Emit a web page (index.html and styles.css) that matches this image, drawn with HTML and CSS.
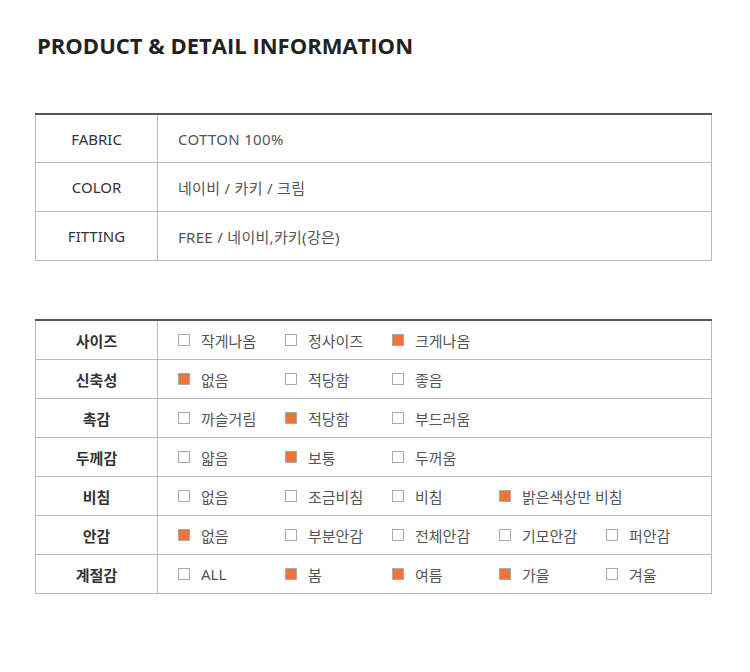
FILE: index.html
```html
<!DOCTYPE html>
<html lang="ko">
<head>
<meta charset="utf-8">
<link rel="stylesheet" href="styles.css">
</head>
<body>
<div class="page">
  <h1 class="title">PRODUCT &amp; DETAIL INFORMATION</h1>

  <table class="info">
    <tr><th>FABRIC</th><td>COTTON 100%</td></tr>
    <tr><th>COLOR</th><td>네이비 / 카키 / 크림</td></tr>
    <tr><th>FITTING</th><td>FREE / 네이비,카키(강은)</td></tr>
  </table>

  <table class="detail">
    <tr><th>사이즈</th><td><div class="opts">
      <span class="opt"><i class="box"></i>작게나옴</span>
      <span class="opt"><i class="box"></i>정사이즈</span>
      <span class="opt"><i class="box on"></i>크게나옴</span>
    </div></td></tr>
    <tr><th>신축성</th><td><div class="opts">
      <span class="opt"><i class="box on"></i>없음</span>
      <span class="opt"><i class="box"></i>적당함</span>
      <span class="opt"><i class="box"></i>좋음</span>
    </div></td></tr>
    <tr><th>촉감</th><td><div class="opts">
      <span class="opt"><i class="box"></i>까슬거림</span>
      <span class="opt"><i class="box on"></i>적당함</span>
      <span class="opt"><i class="box"></i>부드러움</span>
    </div></td></tr>
    <tr><th>두께감</th><td><div class="opts">
      <span class="opt"><i class="box"></i>얇음</span>
      <span class="opt"><i class="box on"></i>보통</span>
      <span class="opt"><i class="box"></i>두꺼움</span>
    </div></td></tr>
    <tr><th>비침</th><td><div class="opts">
      <span class="opt"><i class="box"></i>없음</span>
      <span class="opt"><i class="box"></i>조금비침</span>
      <span class="opt"><i class="box"></i>비침</span>
      <span class="opt wide"><i class="box on"></i>밝은색상만 비침</span>
    </div></td></tr>
    <tr><th>안감</th><td><div class="opts">
      <span class="opt"><i class="box on"></i>없음</span>
      <span class="opt"><i class="box"></i>부분안감</span>
      <span class="opt"><i class="box"></i>전체안감</span>
      <span class="opt"><i class="box"></i>기모안감</span>
      <span class="opt"><i class="box"></i>퍼안감</span>
    </div></td></tr>
    <tr><th>계절감</th><td><div class="opts">
      <span class="opt"><i class="box"></i>ALL</span>
      <span class="opt"><i class="box on"></i>봄</span>
      <span class="opt"><i class="box on"></i>여름</span>
      <span class="opt"><i class="box on"></i>가을</span>
      <span class="opt"><i class="box"></i>겨울</span>
    </div></td></tr>
  </table>
</div>
</body>
</html>
```

FILE: styles.css
```css
html, body {
  margin: 0;
  padding: 0;
  background: #fff;
}
body {
  font-family: "Noto Sans", "Noto Sans CJK KR", sans-serif;
  color: #555;
}
.page {
  padding: 30px 38px 0 35px;
  width: 677px;
}
.title {
  margin: 0 0 0 2px;
  font-family: "Open Sans", "Noto Sans", sans-serif;
  font-weight: 700;
  font-size: 22px;
  line-height: 30px;
  color: #222;
  letter-spacing: 0;
}
table {
  width: 677px;
  border-collapse: collapse;
  table-layout: fixed;
  font-size: 15px;
}
th, td {
  border: 1px solid #bbb;
  padding: 0;
}
tr:first-child th, tr:first-child td {
  border-top: 2px solid #555;
}
th {
  width: 121px;
  text-align: center;
  font-weight: 400;
  color: #333;
}
td {
  text-align: left;
  padding-left: 20px;
  color: #555;
}
.info {
  margin-top: 53px;
}
.info td {
  letter-spacing: 0.3px;
}
.info th, .info td {
  height: 48px;
}
.info tr:first-child th, .info tr:first-child td {
  height: 47px;
}
.detail {
  margin-top: 58px;
}
.detail th, .detail td {
  height: 38px;
}
.detail th {
  font-family: "Noto Sans CJK KR", sans-serif;
  font-weight: 700;
  color: #333;
}
.opts {
  display: flex;
  align-items: center;
}
.opt {
  display: flex;
  align-items: center;
  width: 107px;
  flex: none;
  white-space: nowrap;
}
.opt.wide {
  width: auto;
}
.box {
  display: inline-block;
  width: 10px;
  height: 10px;
  border: 1px solid #aaa;
  background: #fff;
  margin-right: 11px;
  flex: none;
}
.box.on {
  background: #f07338;
}
```
